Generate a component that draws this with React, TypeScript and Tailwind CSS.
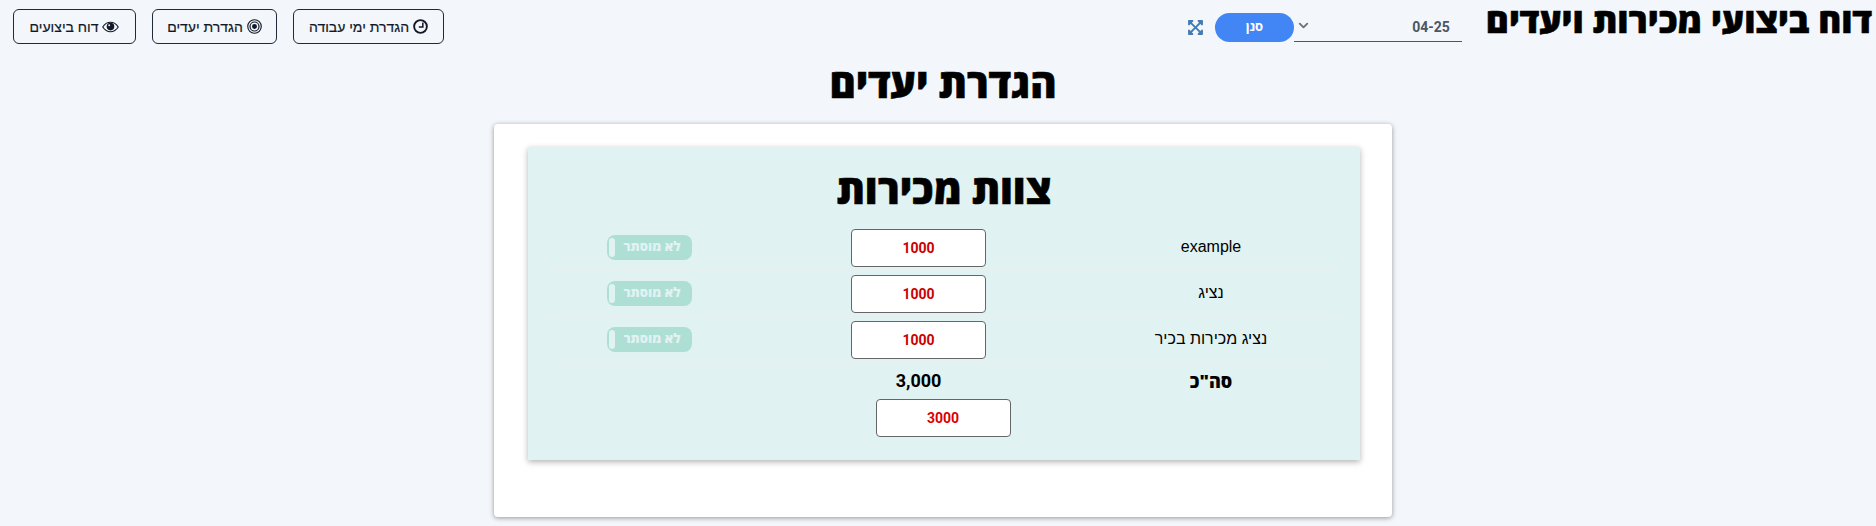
import { FaExpandArrowsAlt } from "react-icons/fa";
import { ChevronDown } from "lucide-react";

const agents = ["example", "נציג", "נציג מכירות בכיר"];

function ClockIcon() {
  return (
    <svg viewBox="0 0 16 16" className="size-[15px]" fill="none" stroke="currentColor" strokeWidth="2">
      <circle cx="8" cy="8" r="6.8" />
      <path d="M10.5 3.8V8.4H6.2" strokeWidth="1.6" />
    </svg>
  );
}

function TargetIcon() {
  return (
    <svg viewBox="0 0 16 16" className="size-[15px]" fill="none" stroke="currentColor">
      <circle cx="8" cy="8" r="7.2" strokeWidth="1.2" />
      <circle cx="8" cy="8" r="4.8" strokeWidth="1.3" />
      <circle cx="8" cy="8" r="2.6" fill="currentColor" stroke="none" />
    </svg>
  );
}

function EyeIcon() {
  return (
    <svg viewBox="0 0 18 12" className="h-[12px] w-[17px]" fill="none" stroke="currentColor">
      <path d="M0.8 6C3 2.6 5.8 1 9 1s6 1.6 8.2 5C15 9.4 12.2 11 9 11S3 9.4 0.8 6Z" strokeWidth="1.2" />
      <circle cx="9" cy="5.6" r="4" fill="currentColor" stroke="none" />
      <circle cx="7.6" cy="4.2" r="1" fill="#f3f7fb" stroke="none" />
    </svg>
  );
}

function NavButton({ icon, label, width }: { icon: React.ReactNode; label: string; width: string }) {
  return (
    <button className={`flex h-[35px] items-center justify-center gap-1 rounded-md border border-[#1f2937] font-['Liberation_Sans',sans-serif] text-sm text-[#111827] [-webkit-text-stroke:0.2px] ${width}`}>
      {icon}
      <span>{label}</span>
    </button>
  );
}

function ValueInput({ value, tone }: { value: string; tone: string }) {
  return (
    <input
      readOnly
      value={value}
      className={`h-[38px] w-[135px] rounded border border-[#666] bg-white text-center font-['Roboto',sans-serif] text-sm font-bold ${tone}`}
    />
  );
}

export default function App() {
  return (
    <div dir="rtl" className="h-[526px] overflow-hidden bg-[#f3f7fb] font-['Open_Sans','Liberation_Sans',sans-serif] text-black">
      <header className="flex h-[50px] items-start pr-1">
        <h1 className="text-[35px] leading-[40px] font-black whitespace-nowrap [-webkit-text-stroke:0.6px]">דוח ביצועי מכירות ויעדים</h1>
        <div className="mr-6 mt-[12px] flex h-[30px] items-center">
          <div dir="ltr" className="flex h-[30px] w-[168px] items-center justify-between border-b border-[#555] pl-[2px] pr-3 font-['Roboto',sans-serif] text-sm font-bold text-[#4b5563]">
            <ChevronDown className="mb-[2px] size-[15px] text-[#6b7280]" strokeWidth={3} />
            <span>04-25</span>
          </div>
          <button className="h-[29px] w-[79px] rounded-full bg-[#4285f4] text-[13px] font-bold text-white">סנן</button>
          <FaExpandArrowsAlt className="mr-[11px] size-[17px] text-[#3f7cb8]" />
        </div>
        <nav className="mr-auto mt-[9px] ml-[13px] flex gap-4">
          <NavButton icon={<ClockIcon />} label="הגדרת ימי עבודה" width="w-[151px]" />
          <NavButton icon={<TargetIcon />} label="הגדרת יעדים" width="w-[125px]" />
          <NavButton icon={<EyeIcon />} label="דוח ביצועים" width="w-[123px]" />
        </nav>
      </header>
      <h2 className="mt-[8px] pl-[10px] text-center text-[40px] leading-[50px] font-black [-webkit-text-stroke:0.6px]">הגדרת יעדים</h2>
      <main className="mr-[484px] mt-[16px] h-[393px] w-[898px] rounded bg-white pl-[34px] pr-[32px] pt-[23px] shadow-[0_1px_5px_rgba(0,0,0,0.4)]">
        <section className="h-[313px] bg-[#e0f2f1] shadow-[0_2px_6px_rgba(0,0,0,0.3)]">
          <h3 className="pt-[17px] text-center text-[40px] leading-[50px] font-black [-webkit-text-stroke:0.6px]">צוות מכירות</h3>
          <div className="mx-6 mt-[11px]">
            {agents.map((name) => (
              <div key={name} className="grid h-[46px] grid-cols-[250px_335px_1fr] items-center border-b border-[#e8f0ef] text-center font-['Liberation_Sans',sans-serif] text-base">
                <span className="-mt-[2px]">{name}</span>
                <div className="flex justify-center">
                  <ValueInput value="1000" tone="text-[#cc0000]" />
                </div>
                <div className="flex justify-center">
                  <div dir="ltr" className="-mt-[1px] mr-[4px] flex h-[25px] w-[85px] items-center rounded-[8px] bg-[#aedfd5] pl-[2px] pr-[3px]">
                    <span className="h-[19px] w-[6px] rounded-full bg-[#e0f2f1]" />
                    <span dir="rtl" className="flex-1 text-center font-['Open_Sans',sans-serif] text-[13px] font-extrabold text-[#e0f2f1]">לא מוסתר</span>
                  </div>
                </div>
              </div>
            ))}
            <div className="grid h-[36px] grid-cols-[250px_335px_1fr] items-center text-center text-lg font-extrabold">
              <span>סה"כ</span>
              <span className="font-['Roboto',sans-serif] font-bold">3,000</span>
            </div>
          </div>
          <div className="flex justify-center pr-[2px]">
            <ValueInput value="3000" tone="text-[#dd0000]" />
          </div>
        </section>
      </main>
    </div>
  );
}
